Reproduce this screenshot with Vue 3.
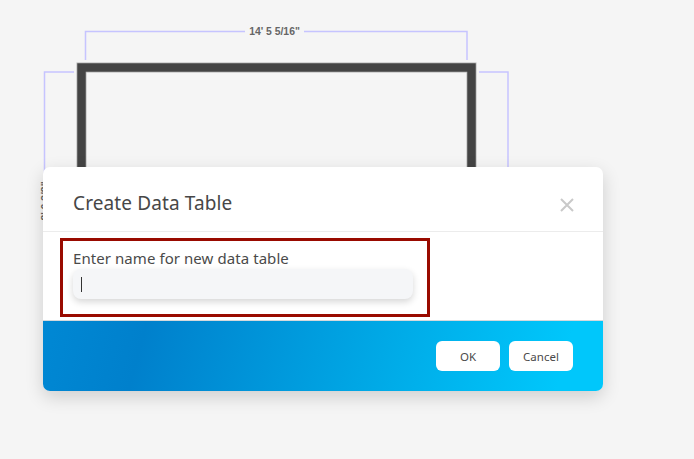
<template>
  <main class="page">
    <!-- the plan behind the dialog -->
    <svg class="plan" width="694" height="459" viewBox="0 0 694 459">
      <path class="dim" d="M85.5 60V31.5H245M304 31.5H467V60" />
      <path class="dim" d="M74 72H44.5V180M479 72H508V180" />
      <rect class="wall-edge" x="81.5" y="67.5" width="390" height="200" />
      <rect class="wall" x="81.5" y="67.5" width="390" height="200" />
      <text class="dim-label" x="274.5" y="35" text-anchor="middle">14' 5 5/16"</text>
      <text class="dim-label" transform="translate(49 201) rotate(-90)" text-anchor="middle">8' 6 3/8"</text>
    </svg>

    <section class="dialog">
      <header class="dialog-head">
        <h2>Create Data Table</h2>
        <button class="close" aria-label="Close">
          <svg width="14" height="14" viewBox="0 0 14 14">
            <path d="M1 1L13 13M13 1L1 13" />
          </svg>
        </button>
      </header>

      <div class="dialog-body">
        <label for="table-name">Enter name for new data table</label>
        <div id="table-name" class="name-input"><span class="caret"></span></div>
        <div class="highlight"></div>
      </div>

      <footer class="dialog-foot">
        <button class="btn">OK</button>
        <button class="btn">Cancel</button>
      </footer>
    </section>
  </main>
</template>

<script setup>
</script>

<style>
body {
  background: #f5f5f5;
}
</style>

<style scoped>
.page {
  position: relative;
  width: 694px;
  height: 459px;
  overflow: hidden;
  background: #f5f5f5;
  font-family: "Noto Sans", "Open Sans", sans-serif;
}

.plan {
  position: absolute;
  left: 0;
  top: 0;
}

.dim {
  fill: none;
  stroke: #c6c4ff;
  stroke-width: 1.5;
}

.wall-edge {
  fill: none;
  stroke: #b4b4b4;
  stroke-width: 10;
}

.wall {
  fill: none;
  stroke: #444;
  stroke-width: 8.4;
}

.dim-label {
  font-family: "Liberation Sans", sans-serif;
  font-size: 10.4px;
  font-weight: 700;
  fill: #666;
}

.dialog {
  position: absolute;
  left: 43px;
  top: 167px;
  width: 560px;
  height: 224px;
  display: flex;
  flex-direction: column;
  background: #fff;
  border-radius: 7px;
  box-shadow: 0 6px 18px rgba(0, 0, 0, 0.16);
}

.dialog-head {
  height: 65px;
  box-sizing: border-box;
  display: flex;
  align-items: center;
  justify-content: space-between;
  padding: 8px 29px 0 30px;
  border-bottom: 1px solid #ececec;
}

.dialog-head h2 {
  margin: 0;
  font-size: 19px;
  font-weight: 400;
  letter-spacing: 0.12px;
  color: #474747;
}

.close {
  display: flex;
  padding: 0;
  border: 0;
  background: none;
  margin-top: 4px;
}

.close path {
  stroke: #c9c9c9;
  stroke-width: 2;
  fill: none;
}

.dialog-body {
  position: relative;
  flex: 1;
  padding: 16px 30px 0;
}

.dialog-body label {
  display: block;
  font-size: 15px;
  line-height: 20px;
  letter-spacing: 0.07px;
  color: #4a4a4a;
}

.name-input {
  display: flex;
  align-items: center;
  width: 340px;
  height: 30px;
  margin-top: 1px;
  padding-left: 8px;
  box-sizing: border-box;
  background: #f5f6f8;
  border-radius: 8px;
  box-shadow: 0 3px 7px rgba(0, 0, 0, 0.16);
}

.caret {
  width: 1px;
  height: 15px;
  background: #333;
}

.highlight {
  position: absolute;
  left: 17px;
  top: 6px;
  width: 370px;
  height: 79px;
  box-sizing: border-box;
  border: 3px solid #990a00;
  pointer-events: none;
}

.dialog-foot {
  height: 71px;
  flex-shrink: 0;
  box-sizing: border-box;
  display: flex;
  align-items: center;
  justify-content: flex-end;
  gap: 9px;
  padding: 0 30px 0 0;
  border-top: 1px solid #d5d9dc;
  border-radius: 0 0 7px 7px;
  background: linear-gradient(105deg, #0088d4 0%, #0080cc 18%, #00a9e6 60%, #00c7fb 92%);
}

.btn {
  width: 64px;
  height: 30px;
  padding: 0;
  border: 0;
  border-radius: 6px;
  background: #fff;
  font-family: inherit;
  font-size: 11.5px;
  color: #4a4a4a;
}
</style>
